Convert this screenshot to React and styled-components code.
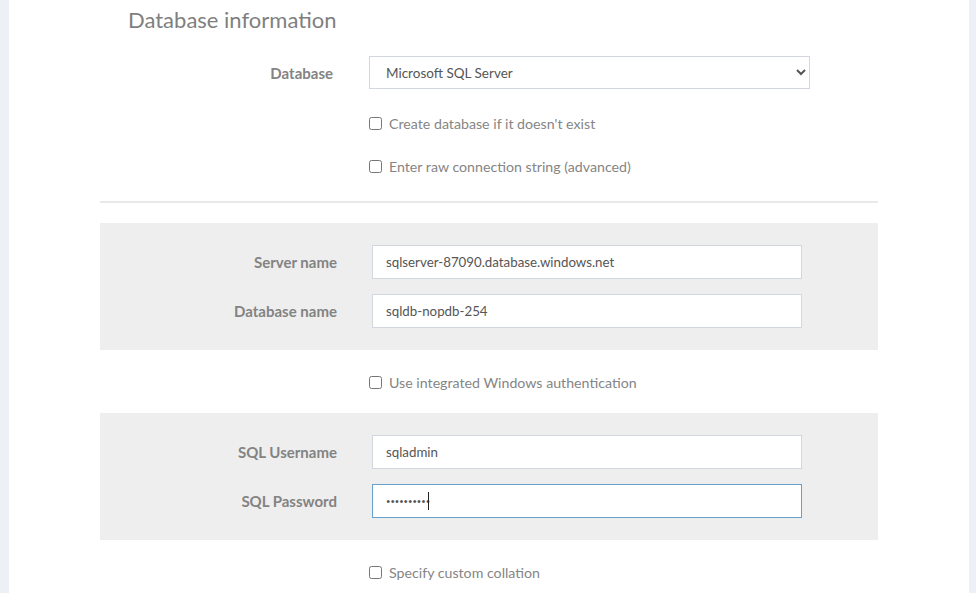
import React from "react"
import styled, { createGlobalStyle } from "styled-components"

const GlobalStyle = createGlobalStyle`
  html, body {
    margin: 0;
    padding: 0;
    background: #edf0f5;
    font-family: Lato, "Liberation Sans", sans-serif;
  }
`

const Page = styled.div`
  display: flex;
  padding: 0 7px 0 9px;
  height: 593px;
  overflow: hidden;
`

const Card = styled.div`
  flex: 1;
  background: #ffffff;
`

const Content = styled.div`
  width: 778px;
  margin: 0 auto;
  display: flex;
  flex-direction: column;
`

const Title = styled.h2`
  margin: 0;
  padding: 6px 0 0 28px;
  height: 33px;
  font-size: 22px;
  font-weight: 400;
  color: #7f7f7f;
`

const FormRow = styled.div`
  display: grid;
  grid-template-columns: ${(props) => props.$labelWidth}px ${(props) => props.$controlWidth}px;
  column-gap: ${(props) => props.$gap}px;
  align-items: center;
  margin-top: ${(props) => props.$top || 0}px;
`

const Label = styled.label`
  text-align: right;
  font-size: 15px;
  font-weight: 700;
  color: #838383;
`

const Select = styled.select`
  height: 33px;
  width: 100%;
  border: 1px solid #d2d6de;
  border-radius: 0;
  background: #ffffff;
  padding: 0 8px 0 12px;
  font-family: Lato, "Liberation Sans", sans-serif;
  font-size: 13.5px;
  color: #555555;
  outline: none;
`

const InputWrap = styled.div`
  position: relative;
  height: 34px;
`

const Input = styled.input`
  box-sizing: border-box;
  height: 34px;
  width: 100%;
  border: 1px solid ${(props) => (props.$active ? "#66a0cc" : "#d2d6de")};
  background: #ffffff;
  padding: 0 13px;
  font-family: Lato, "Liberation Sans", sans-serif;
  font-size: ${(props) => (props.type === "password" ? "7.6px" : "13.3px")};
  color: #555555;
  outline: none;
`

const Caret = styled.span`
  position: absolute;
  left: 56px;
  top: 8px;
  width: 1px;
  height: 18px;
  background: #222222;
`

const CheckRow = styled.label`
  display: flex;
  align-items: center;
  gap: 7px;
  margin-left: 269px;
  height: 20px;
  margin-top: ${(props) => props.$top}px;
  font-size: 14.2px;
  color: #858585;

  input {
    margin: 0;
    width: 13px;
    height: 13px;
  }
`

const Divider = styled.hr`
  margin: 25px 0 0;
  border: 0;
  height: 2px;
  background: #e9e9e9;
`

const Panel = styled.div`
  display: flex;
  flex-direction: column;
  gap: 15px;
  background: #eeeeee;
  padding: 22px 0 22px;
  margin-top: ${(props) => props.$top}px;
`

function PanelField({ label, value, type = "text", active }) {
  return (
    <FormRow $labelWidth={237} $controlWidth={430} $gap={35}>
      <Label>{label}</Label>
      <InputWrap>
        <Input type={type} defaultValue={value} $active={active} />
        {active && <Caret />}
      </InputWrap>
    </FormRow>
  )
}

export default function App() {
  return (
    <Page>
      <GlobalStyle />
      <Card>
        <Content>
          <Title>Database information</Title>
          <FormRow $labelWidth={233} $controlWidth={441} $gap={36} $top={17}>
            <Label>Database</Label>
            <Select defaultValue="sqlserver">
              <option value="sqlserver">Microsoft SQL Server</option>
              <option value="mysql">MySQL</option>
              <option value="postgres">PostgreSQL</option>
            </Select>
          </FormRow>
          <CheckRow $top={24}>
            <input type="checkbox" />
            Create database if it doesn't exist
          </CheckRow>
          <CheckRow $top={23}>
            <input type="checkbox" />
            Enter raw connection string (advanced)
          </CheckRow>
          <Divider />
          <Panel $top={20}>
            <PanelField label="Server name" value="sqlserver-87090.database.windows.net" />
            <PanelField label="Database name" value="sqldb-nopdb-254" />
          </Panel>
          <CheckRow $top={22}>
            <input type="checkbox" />
            Use integrated Windows authentication
          </CheckRow>
          <Panel $top={21}>
            <PanelField label="SQL Username" value="sqladmin" />
            <PanelField label="SQL Password" value="1234567890" type="password" active />
          </Panel>
          <CheckRow $top={22}>
            <input type="checkbox" />
            Specify custom collation
          </CheckRow>
        </Content>
      </Card>
    </Page>
  )
}
